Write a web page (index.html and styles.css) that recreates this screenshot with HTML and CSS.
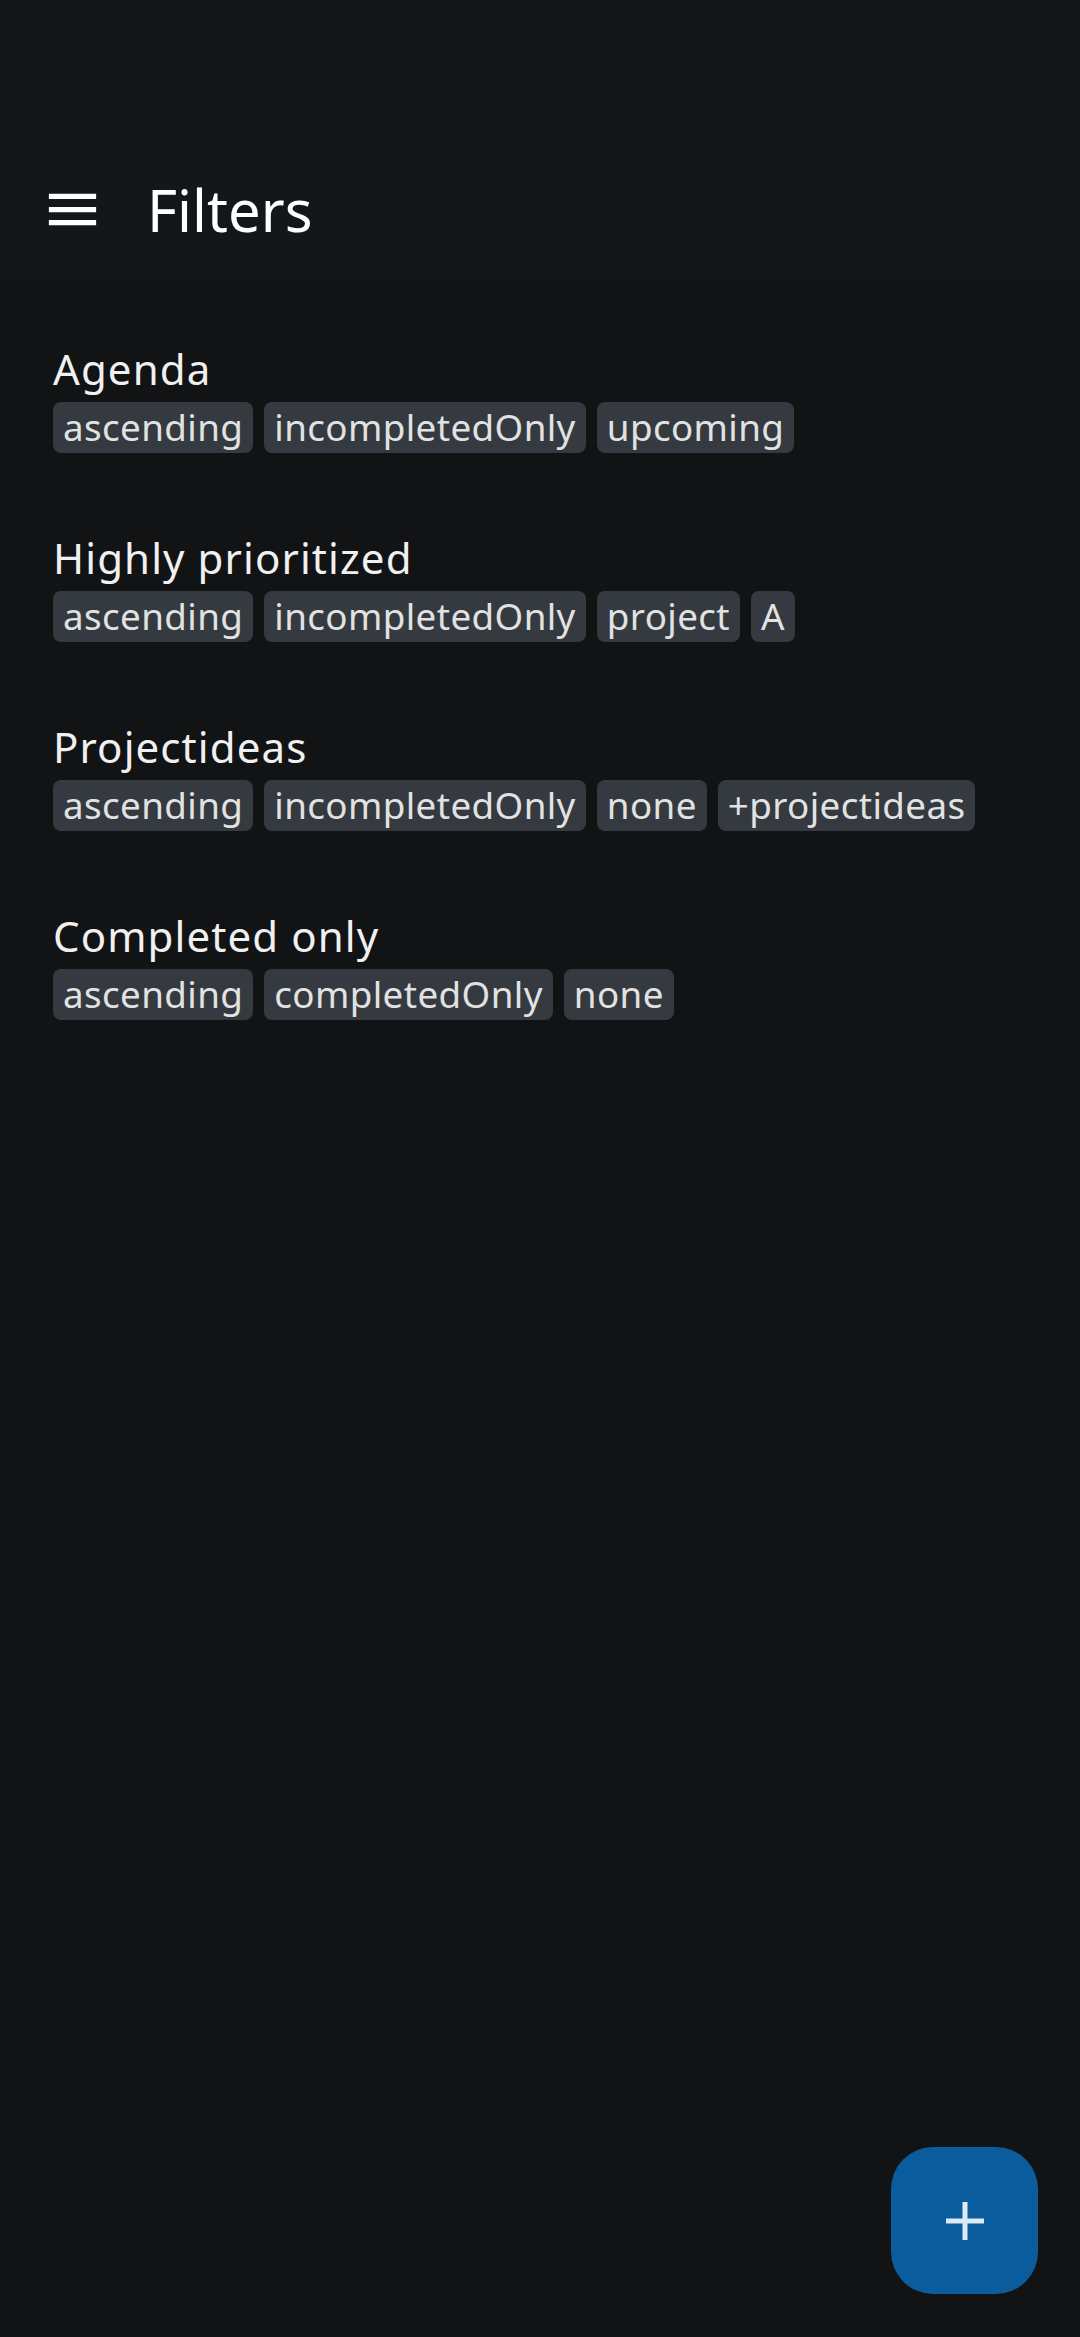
FILE: index.html
```html
<!DOCTYPE html>
<html>
<head>
<meta charset="utf-8">
<link rel="stylesheet" href="styles.css">
</head>
<body>
<header class="appbar">
  <div class="toolbar">
    <div class="nav-icon">
      <svg width="63" height="63" viewBox="0 0 24 24"><path d="M3 6h18v2H3zM3 11h18v2H3zM3 16h18v2H3z" fill="#ffffff"/></svg>
    </div>
    <h1 class="title">Filters</h1>
  </div>
</header>
<main class="list">
  <div class="item">
    <div class="name">Agenda</div>
    <div class="chips"><span class="chip">ascending</span><span class="chip">incompletedOnly</span><span class="chip">upcoming</span></div>
  </div>
  <div class="item">
    <div class="name">Highly prioritized</div>
    <div class="chips"><span class="chip">ascending</span><span class="chip">incompletedOnly</span><span class="chip">project</span><span class="chip">A</span></div>
  </div>
  <div class="item">
    <div class="name">Projectideas</div>
    <div class="chips"><span class="chip">ascending</span><span class="chip">incompletedOnly</span><span class="chip">none</span><span class="chip">+projectideas</span></div>
  </div>
  <div class="item">
    <div class="name">Completed only</div>
    <div class="chips"><span class="chip">ascending</span><span class="chip">completedOnly</span><span class="chip">none</span></div>
  </div>
</main>
<button class="fab" aria-label="Add">
  <svg width="38" height="38" viewBox="0 0 38 38"><path d="M16.5 0h5v16.5H38v5H21.5V38h-5V21.5H0v-5h16.5z" fill="#dde9f5"/></svg>
</button>
</body>
</html>
```
FILE: styles.css
```css
html, body {
  margin: 0;
  padding: 0;
  background: #121315;
  font-family: "Noto Sans", "Open Sans", sans-serif;
  color: #eeeeee;
}
body {
  width: 1080px;
  height: 2337px;
  position: relative;
  overflow: hidden;
}
.appbar {
  height: 280px;
  background: #13171a;
  display: flex;
  flex-direction: column;
  justify-content: flex-end;
}
.toolbar {
  height: 142px;
  display: flex;
  align-items: center;
  padding-left: 41px;
}
.nav-icon {
  width: 63px;
  height: 63px;
  display: flex;
}
.title {
  margin: 0 0 0 43px;
  font-size: 58px;
  font-weight: 400;
  color: #ffffff;
  line-height: normal;
}
.list {
  padding-top: 22px;
}
.item {
  padding: 38px 53px;
  display: flex;
  flex-direction: column;
  gap: 5px;
}
.name {
  font-size: 42px;
  line-height: 57px;
  color: #f0f0f0;
  letter-spacing: 1.1px;
}
.chips {
  display: flex;
  gap: 11px;
}
.chip {
  background: #343a40;
  color: #e2e2e2;
  font-size: 36.75px;
  line-height: 51px;
  height: 51px;
  padding: 0 10px;
  border-radius: 8px;
  letter-spacing: 0.4px;
}
.fab {
  position: absolute;
  right: 42px;
  bottom: 43px;
  width: 147px;
  height: 147px;
  border: none;
  border-radius: 42px;
  background: #0a5c9c;
  display: flex;
  align-items: center;
  justify-content: center;
  padding: 0;
}
```
